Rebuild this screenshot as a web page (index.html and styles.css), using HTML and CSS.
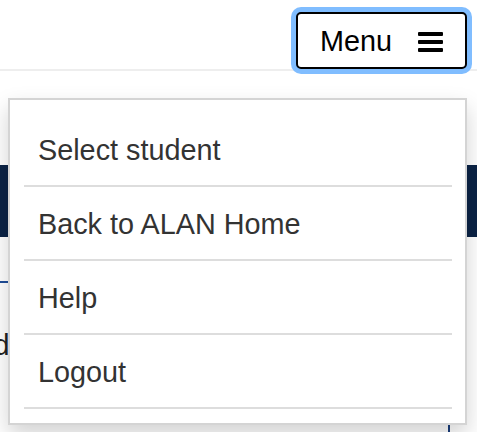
FILE: index.html
```html
<!DOCTYPE html>
<html lang="en">
<head>
<meta charset="utf-8">
<title>ALAN</title>
<link rel="stylesheet" href="styles.css">
</head>
<body>
<header class="topbar">
  <button class="menu-btn" type="button">
    <span class="menu-label">Menu</span>
    <svg class="menu-icon" width="25" height="20" viewBox="0 0 25 20" aria-hidden="true">
      <rect x="0" y="0" width="25" height="4" rx="1"/>
      <rect x="0" y="8" width="25" height="4" rx="1"/>
      <rect x="0" y="16" width="25" height="4" rx="1"/>
    </svg>
  </button>
</header>
<main class="content">
  <div class="navbar"></div>
  <div class="section-line"></div>
  <p class="intro">Good</p>
  <div class="side-rule"></div>
</main>
<ul class="dropdown">
  <li class="dropdown-item">Select student</li>
  <li class="dropdown-item">Back to ALAN Home</li>
  <li class="dropdown-item">Help</li>
  <li class="dropdown-item">Logout</li>
</ul>
</body>
</html>
```
FILE: styles.css
```css
html, body {
  margin: 0;
  padding: 0;
  background: #ffffff;
  font-family: "Liberation Sans", Arial, sans-serif;
  overflow: hidden;
}

.topbar {
  box-sizing: border-box;
  height: 71px;
  border-bottom: 2px solid #eeeeee;
  display: flex;
  justify-content: flex-end;
  align-items: flex-start;
  padding-top: 12px;
  padding-right: 10px;
}

.menu-btn {
  box-sizing: border-box;
  width: 171px;
  height: 57px;
  border: 2px solid #000000;
  border-radius: 5px;
  background: #ffffff;
  box-shadow: 0 0 0 5px rgb(128, 189, 255);
  display: flex;
  align-items: center;
  padding: 0 0 0 22px;
  font-family: "Liberation Sans", Arial, sans-serif;
  font-size: 28.8px;
  color: #000000;
}

.menu-label {
  line-height: 40px;
  padding-top: 1px;
}

.menu-icon {
  margin-left: 26px;
  fill: #000000;
  margin-top: 2px;
}

.content {
  position: relative;
}

.navbar {
  margin-top: 94px;
  height: 72px;
  background: #0b2346;
}

.section-line {
  margin-top: 44px;
  width: 300px;
  border-top: 2px solid #1f4e99;
}

.intro {
  margin: 42px 0 0 -61px;
  font-size: 28.8px;
  line-height: 40px;
  color: #222222;
}

.side-rule {
  margin: 48px 0 0 448px;
  width: 2px;
  height: 40px;
  background: #1a3d7c;
}

.dropdown {
  position: absolute;
  left: 8px;
  top: 98px;
  width: 459px;
  box-sizing: border-box;
  margin: 0;
  list-style: none;
  padding: 13px 13px 14px 14px;
  background: #ffffff;
  border: 2px solid rgba(0, 0, 0, 0.17);
  box-shadow: 0 10px 21px rgba(0, 0, 0, 0.175);
}

.dropdown-item {
  padding: 17px 14px 15px;
  font-size: 28.8px;
  line-height: 40px;
  color: #333333;
  border-bottom: 2px solid #dddddd;
}
```
